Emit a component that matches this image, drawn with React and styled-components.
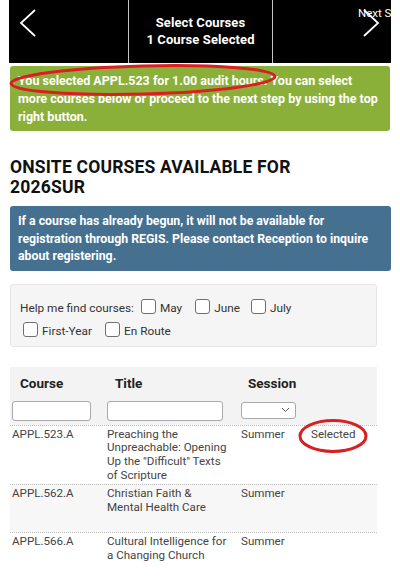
import React from "react";
import styled, { createGlobalStyle } from "styled-components";

const Global = createGlobalStyle`
  html, body { margin: 0; padding: 0; background: #fff; }
  body { font-family: Roboto, "Liberation Sans", sans-serif; color: #333; }
  * { box-sizing: border-box; }
`;

const Page = styled.div`
  position: relative;
  width: 400px;
  padding: 0 9px 0 9px;
  overflow: hidden;
`;

const TopBar = styled.div`
  display: grid;
  grid-template-columns: 119px 144px 119px;
  height: 63px;
  background: #000;
  overflow: hidden;
`;

const BarCell = styled.div`
  position: relative;
  display: flex;
  align-items: flex-start;
  justify-content: ${(p) => p.$align || "center"};
  border-left: ${(p) => (p.$divider ? "1px solid #c8c8c8" : "none")};
  color: #fff;
`;

const Chevron = styled.svg`
  display: block;
  margin-top: 9px;
  margin-left: ${(p) => p.$ml || 0}px;
  margin-right: ${(p) => p.$mr || 0}px;
`;

const BarTitle = styled.div`
  align-self: center;
  text-align: center;
  font-weight: 700;
  font-size: 13px;
  line-height: 17px;
  letter-spacing: 0.1px;
  margin-top: -2px;
`;

const NextLabel = styled.span`
  position: absolute;
  left: 85px;
  top: 6px;
  font-size: 11.5px;
  white-space: nowrap;
  color: #fff;
`;

const Notice = styled.div`
  margin: ${(p) => p.$mt || 3}px ${(p) => p.$mr ?? 1}px 0 1px;
  padding: ${(p) => p.$pt || 6}px 8px 5px 8px;
  border-radius: 3px;
  background: ${(p) => p.$bg};
  color: #fff;
  font-weight: 700;
  font-size: ${(p) => p.$fs || 12.5}px;
  line-height: ${(p) => p.$lh || 18}px;
`;

const Heading = styled.h2`
  margin: 26px 0 0 1px;
  font-family: Roboto, "Liberation Sans", sans-serif;
  font-weight: 700;
  font-size: 17.5px;
  line-height: 20px;
  color: #111;
  letter-spacing: 0.2px;
`;

const Filter = styled.div`
  width: 367px;
  margin: 13px 0 0 1px;
  padding: 16px 9px 8px 9px;
  background: #f5f5f5;
  border: 1px solid #e6e6e6;
  border-radius: 3px;
  font-size: 11.8px;
  color: #333;
  display: flex;
  flex-wrap: wrap;
  align-items: center;
  row-gap: 9px;
`;

const FilterText = styled.span`
  margin-right: 7px;
`;

const Option = styled.label`
  display: inline-flex;
  align-items: center;
  gap: 4px;
  margin-right: ${(p) => p.$mr ?? 13}px;
  margin-left: ${(p) => p.$ml || 0}px;
`;

const Box = styled.span`
  display: inline-block;
  width: 15px;
  height: 15px;
  border: 1px solid #6f6f6f;
  border-radius: 3px;
  background: #fff;
  margin-top: -3px;
`;

const Table = styled.div`
  width: 367px;
  margin: 20px 0 0 1px;
`;

const Row = styled.div`
  display: grid;
  grid-template-columns: 95px 133px 62px 77px;
  min-height: ${(p) => p.$min || 0}px;
  background: ${(p) => p.$bg || "transparent"};
  border-top: ${(p) => (p.$line ? "1px dotted #bdbdbd" : "none")};
`;

const HeadCell = styled.div`
  display: flex;
  flex-direction: column;
  padding: 8px 0 4px 2px;
`;

const HeadLabel = styled.div`
  padding-left: 8px;
  font-weight: 700;
  font-size: 13.5px;
  line-height: 16px;
  color: #222;
  height: 16px;
`;

const TextInput = styled.div`
  margin-top: 10px;
  width: ${(p) => p.$w}px;
  height: 20px;
  background: #fff;
  border: 1px solid #a9a9a9;
  border-radius: 3px;
`;

const Select = styled.div`
  margin-top: 11px;
  margin-left: 1px;
  width: 55px;
  height: 17px;
  background: #fff;
  border: 1px solid #a9a9a9;
  border-radius: 3px;
  display: flex;
  align-items: center;
  justify-content: flex-end;
  padding-right: 5px;
`;

const Cell = styled.div`
  padding: 2px ${(p) => p.$pr || 2}px 2px ${(p) => p.$pl || 2}px;
  font-size: 11.6px;
  line-height: 13.7px;
  color: #444;
`;

const Marks = styled.svg`
  position: absolute;
  left: 0;
  top: 0;
  pointer-events: none;
`;

const rows = [
  { code: "APPL.523.A", title: 'Preaching the Unpreachable: Opening Up the "Difficult" Texts of Scripture', session: "Summer", status: "Selected" },
  { code: "APPL.562.A", title: "Christian Faith & Mental Health Care", session: "Summer", status: "" },
  { code: "APPL.566.A", title: "Cultural Intelligence for a Changing Church", session: "Summer", status: "" },
];

export default function App() {
  return (
    <Page>
      <Global />
      <TopBar>
        <BarCell $align="flex-start">
          <Chevron $ml={10} width="18" height="28" viewBox="0 0 18 28">
            <polyline points="16,1 2,14 16,27" fill="none" stroke="#fff" strokeWidth="1.8" />
          </Chevron>
        </BarCell>
        <BarCell $divider>
          <BarTitle>
            Select Courses
            <br />1 Course Selected
          </BarTitle>
        </BarCell>
        <BarCell $divider $align="flex-end">
          <Chevron $mr={11} width="18" height="28" viewBox="0 0 18 28">
            <polyline points="2,1 16,14 2,27" fill="none" stroke="#fff" strokeWidth="1.8" />
          </Chevron>
          <NextLabel>Next Step</NextLabel>
        </BarCell>
      </TopBar>

      <Notice $bg="#8bb03a">
        You selected APPL.523 for 1.00 audit hours. You can select more courses below or proceed to the next step by using the top right button.
      </Notice>

      <Heading>
        ONSITE COURSES AVAILABLE FOR
        <br />
        2026SUR
      </Heading>

      <Notice $bg="#45708f" $fs={12.3} $lh={17.5} $mt={9} $mr={0} $pt={7}>
        If a course has already begun, it will not be available for registration through REGIS. Please contact Reception to inquire about registering.
      </Notice>

      <Filter>
        <FilterText>Help me find courses:</FilterText>
        <Option><Box />May</Option>
        <Option $mr={11}><Box />June</Option>
        <Option $mr={0}><Box />July</Option>
        <Option $ml={3}><Box />First-Year</Option>
        <Option><Box />En Route</Option>
      </Filter>

      <Table>
        <Row $bg="#f3f3f3">
          <HeadCell>
            <HeadLabel>Course</HeadLabel>
            <TextInput $w={79} />
          </HeadCell>
          <HeadCell>
            <HeadLabel>Title</HeadLabel>
            <TextInput $w={116} />
          </HeadCell>
          <HeadCell>
            <HeadLabel>Session</HeadLabel>
            <Select>
              <svg width="9" height="6" viewBox="0 0 9 6">
                <polyline points="1,1 4.5,4.5 8,1" fill="none" stroke="#555" strokeWidth="1" />
              </svg>
            </Select>
          </HeadCell>
          <HeadCell />
        </Row>
        {rows.map((r, i) => (
          <Row key={r.code} $line $min={48} $bg={i === 1 ? "#f7f7f7" : "#fff"}>
            <Cell>{r.code}</Cell>
            <Cell $pr={10}>{r.title}</Cell>
            <Cell $pl={3}>{r.session}</Cell>
            <Cell $pl={11}>{r.status}</Cell>
          </Row>
        ))}
      </Table>

      <Marks width="400" height="579" viewBox="0 0 400 579">
        <ellipse cx="143" cy="80" rx="132" ry="14" transform="rotate(-1.5 143 80)" fill="none" stroke="#d91f22" strokeWidth="3" />
        <ellipse cx="333" cy="436" rx="33" ry="15.5" fill="none" stroke="#d91f22" strokeWidth="3" />
      </Marks>
    </Page>
  );
}
